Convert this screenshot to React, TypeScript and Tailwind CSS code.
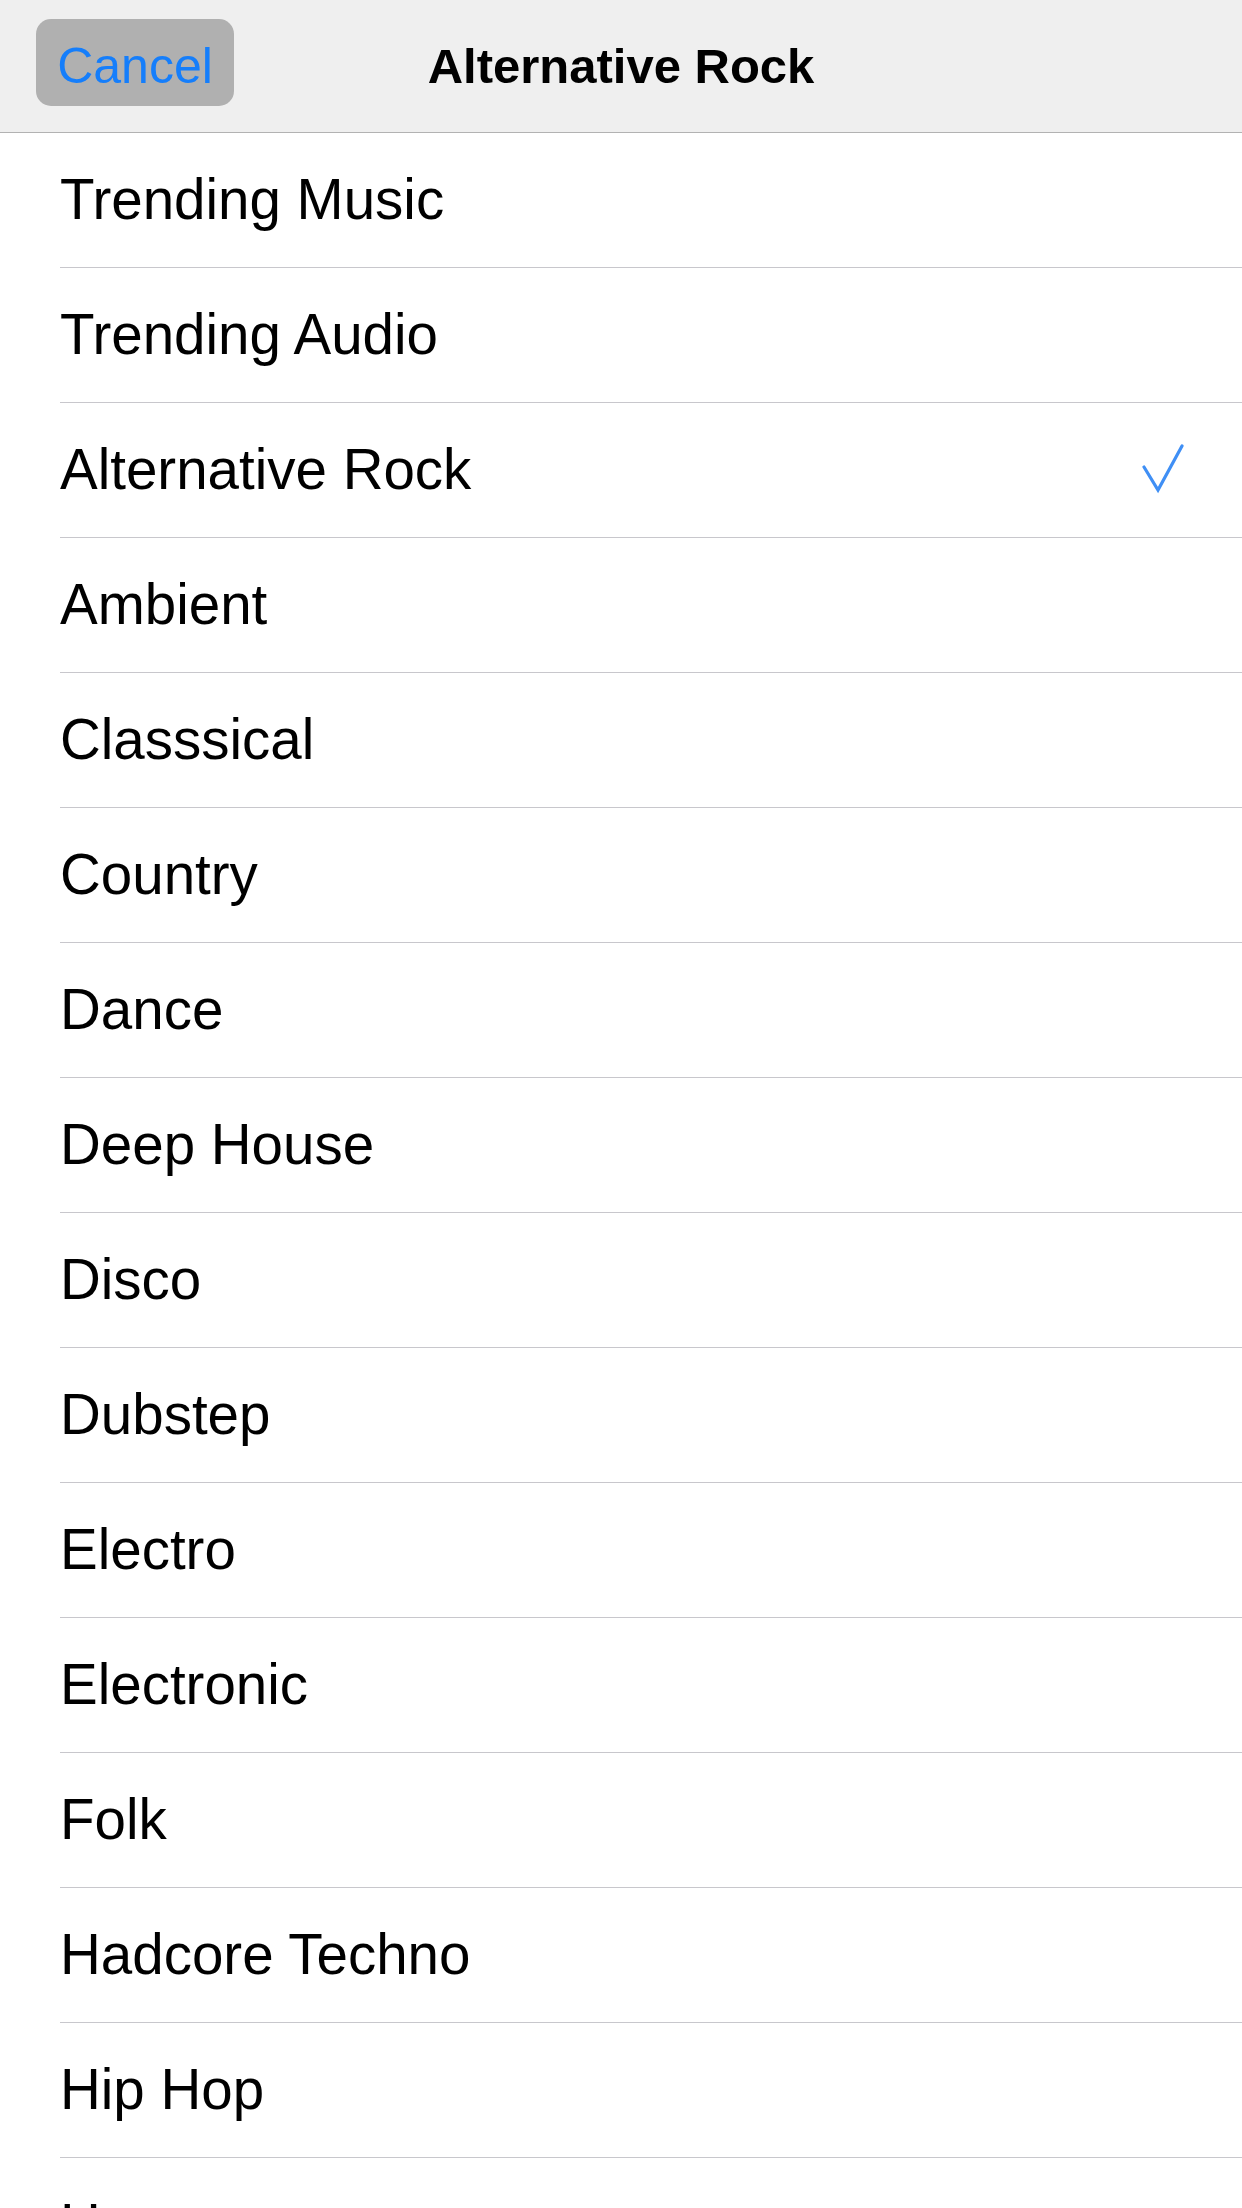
const genres = [
  'Trending Music',
  'Trending Audio',
  'Alternative Rock',
  'Ambient',
  'Classsical',
  'Country',
  'Dance',
  'Deep House',
  'Disco',
  'Dubstep',
  'Electro',
  'Electronic',
  'Folk',
  'Hadcore Techno',
  'Hip Hop',
  'House',
]

const selected = 'Alternative Rock'

function Check() {
  return (
    <svg width="44" height="52" viewBox="0 0 44 52" className="shrink-0">
      <path
        d="M3 23 L17 46 L41 2"
        fill="none"
        stroke="#3f8ff5"
        strokeWidth="3.2"
        strokeLinecap="round"
        strokeLinejoin="miter"
      />
    </svg>
  )
}

export default function App() {
  return (
    <div
      className="w-[1242px] h-[2208px] overflow-hidden bg-white text-black"
      style={{ fontFamily: '"Liberation Sans", Arial, sans-serif' }}
    >
      {/* Nav bar */}
      <div className="relative h-[133px] bg-[#efefef] border-b border-[#b2b2b2] flex items-center justify-center">
        <button className="absolute left-[36px] top-[19px] h-[87px] w-[198px] rounded-[15px] bg-[#b0b0b0] pt-[7px] text-[50px] leading-none text-[#157efb] flex items-center justify-center">
          Cancel
        </button>
        <h1 className="text-[49px] font-bold leading-none">Alternative Rock</h1>
      </div>

      {/* Genre list */}
      <div className="pl-[60px]">
        {genres.map((g) => (
          <div
            key={g}
            className="h-[135px] border-b border-[#c8c7cc] flex items-center justify-between pr-[57px]"
          >
            <span className="text-[56.5px] leading-none">{g}</span>
            {g === selected && <Check />}
          </div>
        ))}
      </div>
    </div>
  )
}
